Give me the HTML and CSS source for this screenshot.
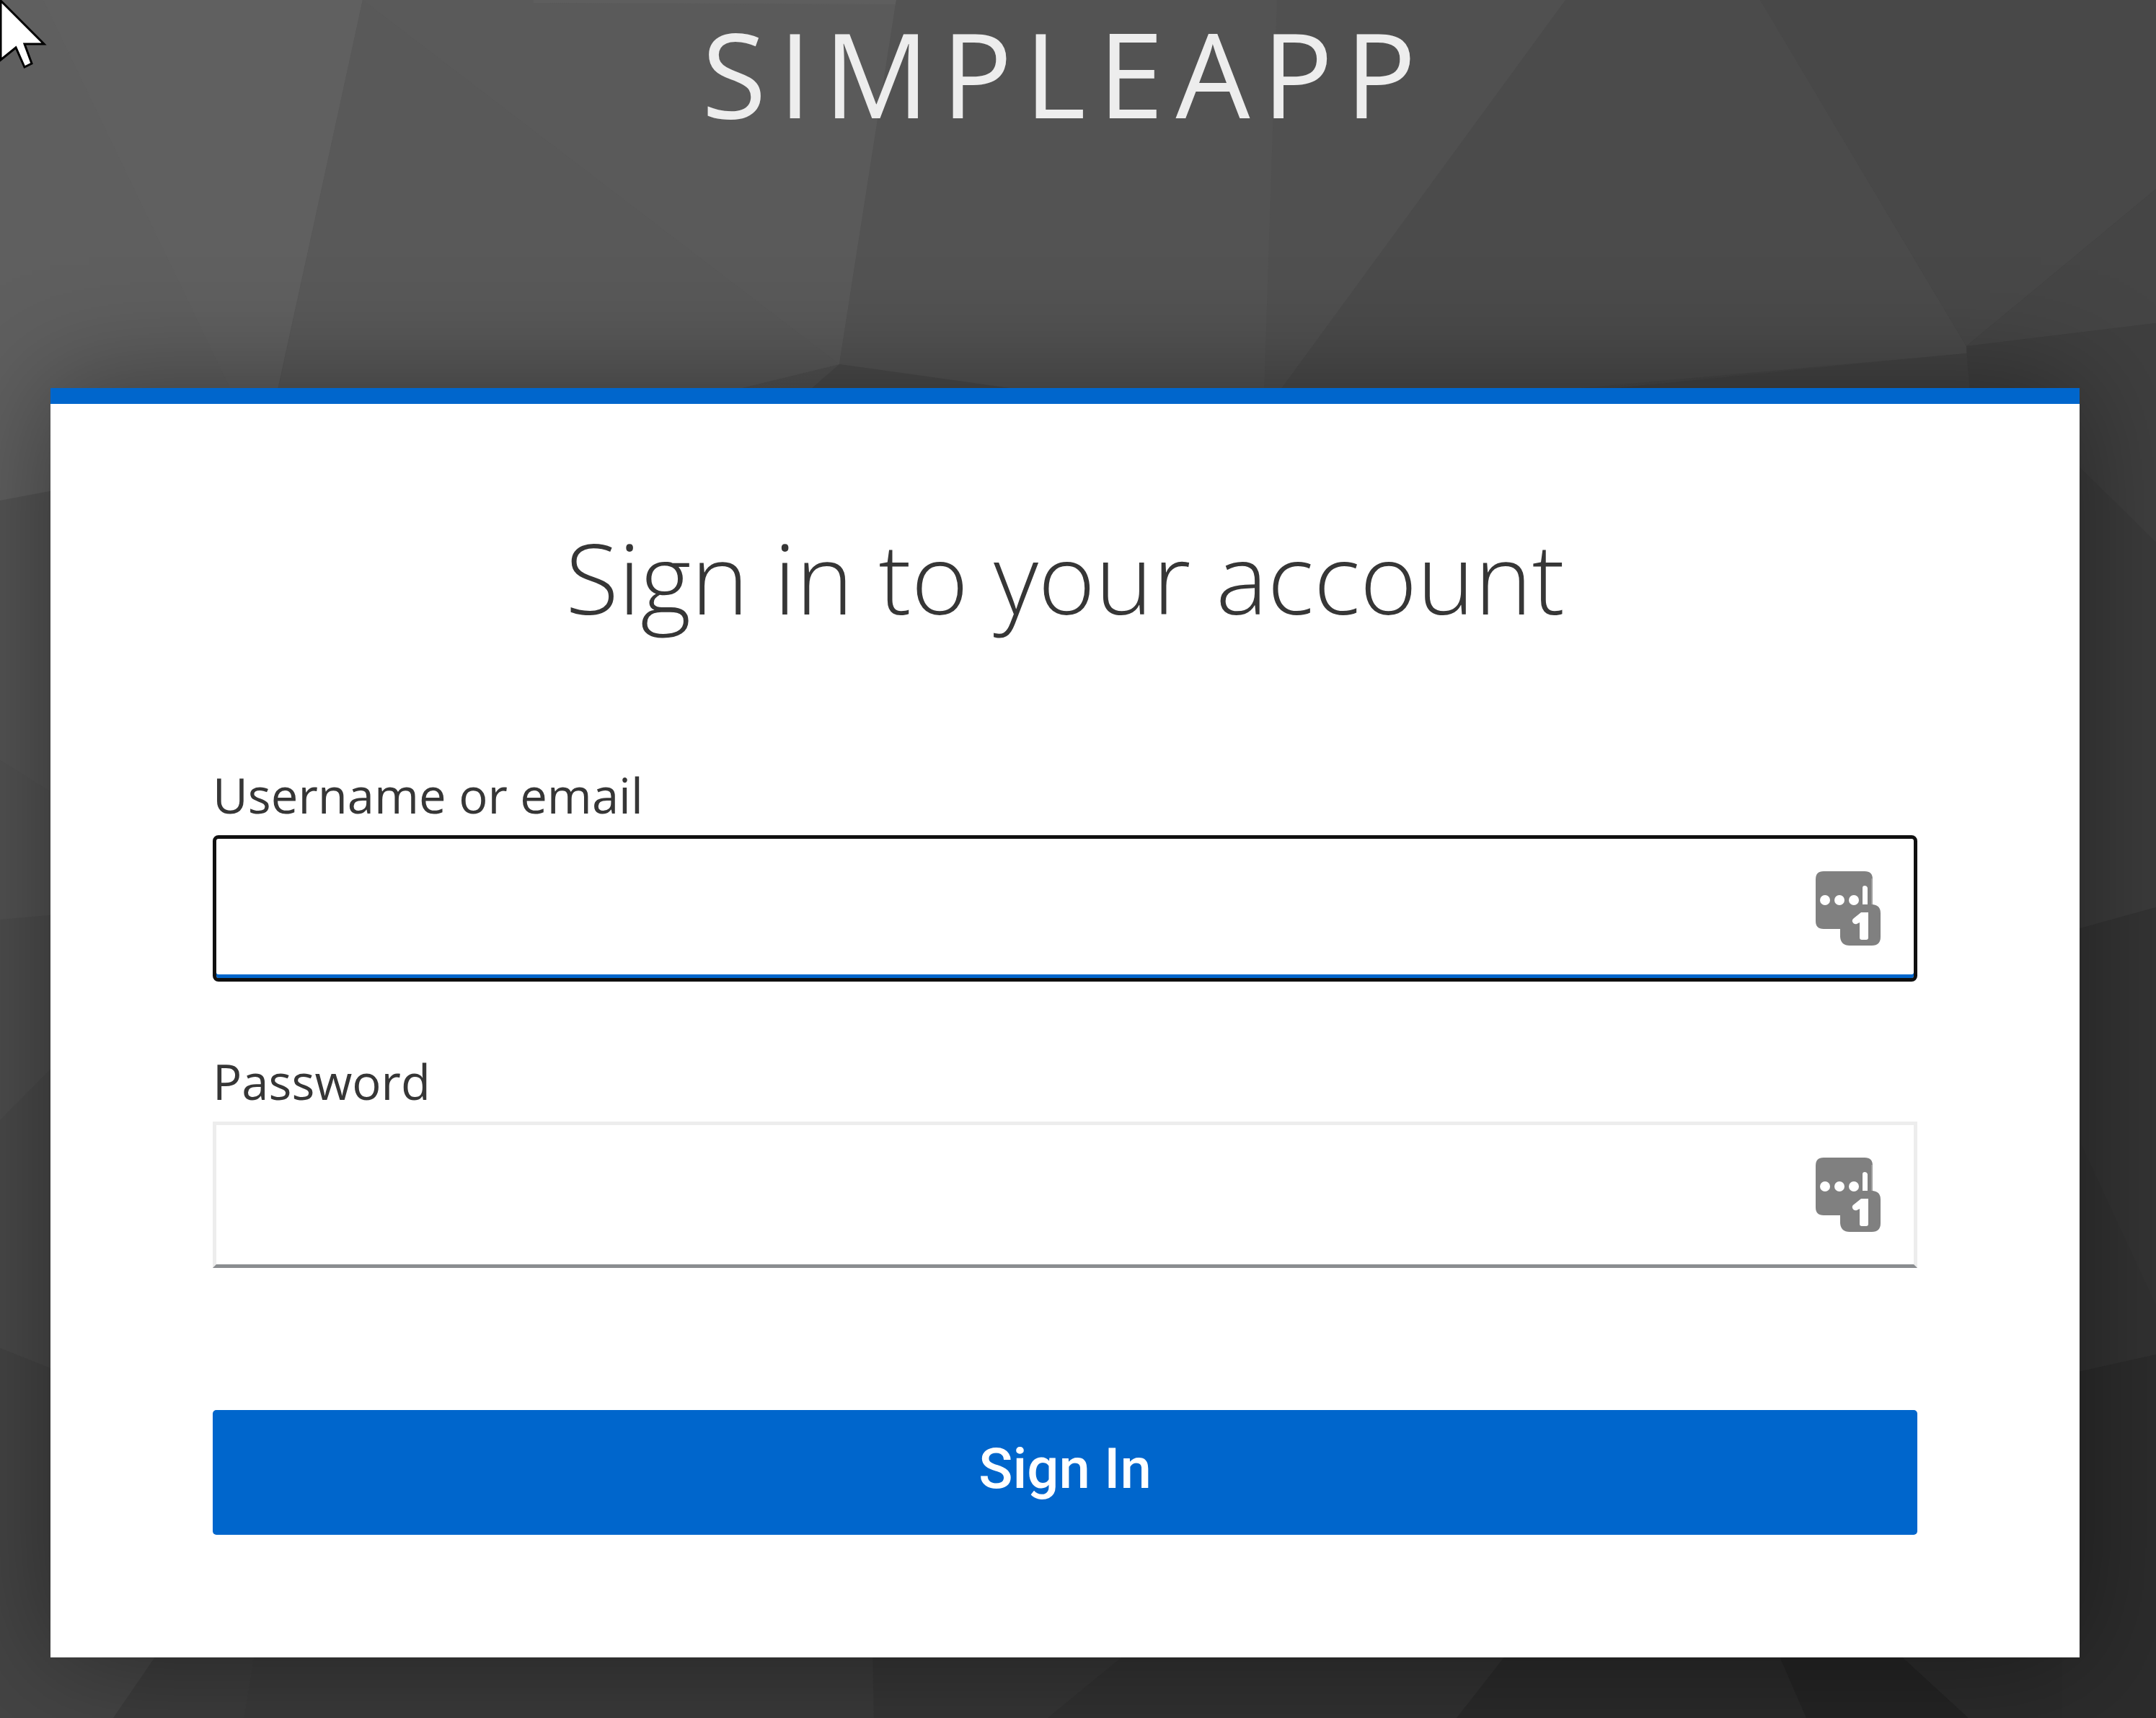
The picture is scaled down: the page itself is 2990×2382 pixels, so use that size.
FILE: index.html
```html
<!DOCTYPE html>
<html lang="en">
<head>
<meta charset="utf-8">
<title>Sign in to SimpleApp</title>
<link rel="stylesheet" href="styles.css">
</head>
<body>
<svg class="backdrop" viewBox="0 0 2990 2382" preserveAspectRatio="none" aria-hidden="true">
  <defs>
    <linearGradient id="shade" x1="0" y1="0" x2="1" y2="1">
      <stop offset="0" stop-color="#606060"/>
      <stop offset="0.5" stop-color="#474747"/>
      <stop offset="1" stop-color="#292929"/>
    </linearGradient>
  </defs>
  <rect width="2990" height="2382" fill="url(#shade)"/>
  <polygon points="0,0 503,0 385,540 385,672 0,694" fill="#606060"/>
  <polygon points="0,0 60,0 320,540 320,672 0,694" fill="#5f5f5f"/>
  <polygon points="503,0 1243,0 1164,505 1000,545 385,545" fill="#5a5a5a"/>
  <polygon points="503,0 1164,505 1000,545 385,545" fill="#595959"/>
  <polygon points="740,0 1243,0 1242,6 740,4" fill="#5e5e5e"/>
  <polygon points="1243,0 2171,0 1776,545 1440,545 1164,505" fill="#535353"/>
  <polygon points="1771,0 2171,0 1776,545 1753,545" fill="#505050"/>
  <polygon points="1164,505 1450,545 1118,545" fill="#4a4a4a"/>
  <polygon points="2171,0 2441,0 2727,480 2727,490 2170,540 1776,540" fill="#4b4b4b"/>
  <polygon points="2441,0 2990,0 2990,262 2727,480" fill="#484848"/>
  <polygon points="2990,262 2990,448 2727,480" fill="#454545"/>
  <polygon points="2727,490 2732,545 2170,545" fill="#434343"/>
  <polygon points="2727,480 2990,448 2990,752 2860,624 2732,545" fill="#3f3f3f"/>
  <polygon points="2860,624 2990,752 2990,1258 2860,1294" fill="#3b3b3b"/>
  <polygon points="2860,1294 2990,1258 2990,1878 2860,1907" fill="#343434"/>
  <polygon points="2860,1530 2990,1810 2990,1878 2860,1907" fill="#323232"/>
  <polygon points="2860,1907 2990,1878 2990,2382 2860,2382" fill="#2c2c2c"/>
  <polygon points="0,694 90,677 90,1110 0,1054" fill="#545454"/>
  <polygon points="0,1054 90,1110 90,1267 0,1275" fill="#525252"/>
  <polygon points="0,1275 90,1267 90,1462 0,1553" fill="#4d4d4d"/>
  <polygon points="0,1553 90,1462 90,1905 0,1869" fill="#494949"/>
  <polygon points="0,1869 90,1905 220,2290 157,2382 0,2382" fill="#444444"/>
  <polygon points="220,2290 353,2290 338,2382 157,2382" fill="#3c3c3c"/>
  <polygon points="353,2290 1210,2290 1212,2382 338,2382" fill="#3a3a3a"/>
  <polygon points="1210,2290 1565,2290 1453,2382 1212,2382" fill="#353535"/>
  <polygon points="1565,2290 2092,2290 2020,2382 1453,2382" fill="#313131"/>
  <polygon points="2092,2290 2465,2290 2505,2382 2020,2382" fill="#2a2a2a"/>
  <polygon points="2465,2290 2630,2290 2730,2382 2505,2382" fill="#242424"/>
  <polygon points="2630,2290 2860,2290 2860,2382 2730,2382" fill="#2b2b2b"/>
</svg>

<div class="page">
  <header class="brand">SimpleApp</header>
  <main class="card">
    <h1 class="card-title">Sign in to your account</h1>
    <form class="form">
      <div class="field">
        <label class="label" for="username">Username or email</label>
        <div class="control">
          <input class="input input-active" id="username" name="username" type="text">
          <svg class="badge" viewBox="0 0 90 103" aria-hidden="true"><use href="#vault"/></svg>
        </div>
      </div>
      <div class="field">
        <label class="label" for="password">Password</label>
        <div class="control">
          <input class="input" id="password" name="password" type="password">
          <svg class="badge" viewBox="0 0 90 103" aria-hidden="true"><use href="#vault"/></svg>
        </div>
      </div>
      <button class="submit" type="button">Sign In</button>
    </form>
  </main>
</div>

<svg class="symbols" aria-hidden="true">
  <symbol id="vault" viewBox="0 0 90 103">
    <path fill="#808080" d="M11 0H68Q79 0 79 11V46Q90 47 90 58V91Q90 103 78 103H47Q35 103 34 91V80H11Q0 80 0 69V11Q0 0 11 0Z"/>
    <circle cx="13" cy="40" r="7" fill="#fff"/>
    <circle cx="33" cy="40" r="7" fill="#fff"/>
    <circle cx="53" cy="40" r="7" fill="#fff"/>
    <path fill="#fff" d="M65 23Q65 20 68 20T72 23V46H65Z"/>
    <path fill="#a0a0a0" d="M77 10H79V46H77Z"/>
    <path fill="#fff" d="M63 57H73V92Q73 95 70 95H64Q61 95 61 92V71L57 73Q53 74 51 70Q50 67 53 65Z"/>
  </symbol>
</svg>

<svg class="pointer" viewBox="0 0 66 96" aria-hidden="true">
  <path fill="#fff" stroke="#000" stroke-width="3" d="M1 1L61 61H34L44 88L34 93L22 66L1 83Z"/>
</svg>
</body>
</html>
```

FILE: styles.css
```css
* {
  box-sizing: border-box;
}

body {
  margin: 0;
  position: relative;
  min-height: 100vh;
  overflow-x: hidden;
  background: #484848;
  color: #363636;
  font-family: "Open Sans", "Noto Sans", sans-serif;
}

.backdrop {
  position: absolute;
  inset: 0;
  width: 100%;
  height: 100%;
}

.page {
  position: relative;
  padding: 0 106px 84px 70px;
}

.brand {
  padding: 0 0 336px;
  color: #ededed;
  font-size: 163px;
  line-height: 202px;
  letter-spacing: 17px;
  text-align: center;
  text-transform: uppercase;
}

.card {
  padding: 150px 225px 170px;
  border-top: 22px solid #06c;
  background: #fff;
  box-shadow: 0 0 150px rgba(3, 3, 3, 0.4);
}

.card-title {
  margin: 0 0 162px;
  font-size: 135px;
  font-weight: 300;
  line-height: 180px;
  text-align: center;
}

.form {
  display: flex;
  flex-direction: column;
}

.field {
  display: flex;
  flex-direction: column;
  gap: 6px;
  margin-bottom: 88px;
}

.label {
  font-size: 67px;
  line-height: 100px;
}

.control {
  position: relative;
  display: flex;
}

.input {
  width: 100%;
  height: 203px;
  padding: 0 160px 0 38px;
  border: 5px solid #ededed;
  border-bottom-color: #8a8d90;
  border-radius: 0;
  outline: 0;
  background: #fff;
  font: inherit;
  font-size: 77px;
}

.input-active {
  border: 5px solid #101010;
  border-radius: 8px;
  box-shadow: inset 0 -5px #06c;
}

.badge {
  position: absolute;
  top: 50px;
  right: 51px;
  width: 90px;
  height: 103px;
}

.submit {
  height: 173px;
  margin-top: 109px;
  padding: 0 0 10px;
  border: 0;
  border-radius: 5px;
  background: #06c;
  color: #fff;
  font-family: Roboto, sans-serif;
  font-size: 78px;
  font-weight: 500;
}

.symbols {
  position: absolute;
  width: 0;
  height: 0;
}

.pointer {
  position: absolute;
  top: 0;
  left: 0;
  width: 66px;
  height: 96px;
}
```
